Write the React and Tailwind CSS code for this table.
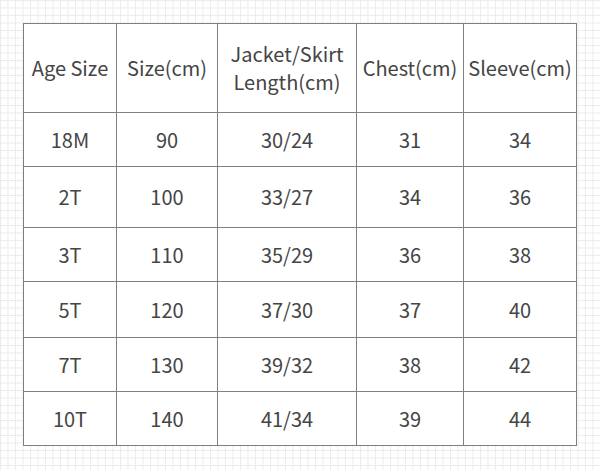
const headers = ["Age Size", "Size(cm)", "Jacket/Skirt Length(cm)", "Chest(cm)", "Sleeve(cm)"];

const rows = [
  ["18M", "90", "30/24", "31", "34"],
  ["2T", "100", "33/27", "34", "36"],
  ["3T", "110", "35/29", "36", "38"],
  ["5T", "120", "37/30", "37", "40"],
  ["7T", "130", "39/32", "38", "42"],
  ["10T", "140", "41/34", "39", "44"],
];

export default function App() {
  return (
    <div
      className="w-[600px] h-[470px] pt-[23px] pl-[23px] bg-white [background-image:linear-gradient(to_right,#ebebeb_1px,transparent_1px),linear-gradient(to_bottom,#ebebeb_1px,transparent_1px)] [background-size:7.5px_7.5px] text-[#454545]"
      style={{ fontFamily: '"Noto Sans CJK SC", "Noto Sans", sans-serif' }}
    >
      <div className="inline-grid grid-cols-[93px_101px_139px_107px_113px] grid-rows-[89px_54px_61px_54px_56px_54px_54px] border-l border-t border-[#7f7f7f] bg-white text-[20px]">
        {headers.map((h, i) => (
          <div
            key={h}
            className="flex items-center justify-center text-center leading-[28px] border-r border-b border-[#7f7f7f] whitespace-nowrap"
          >
            {i === 2 ? (
              <span>
                Jacket/Skirt
                <br />
                Length(cm)
              </span>
            ) : (
              h
            )}
          </div>
        ))}
        {rows.map((r) =>
          r.map((c, j) => (
            <div
              key={r[0] + j}
              className="flex items-center justify-center border-r border-b border-[#7f7f7f]"
            >
              {c}
            </div>
          ))
        )}
      </div>
    </div>
  );
}
